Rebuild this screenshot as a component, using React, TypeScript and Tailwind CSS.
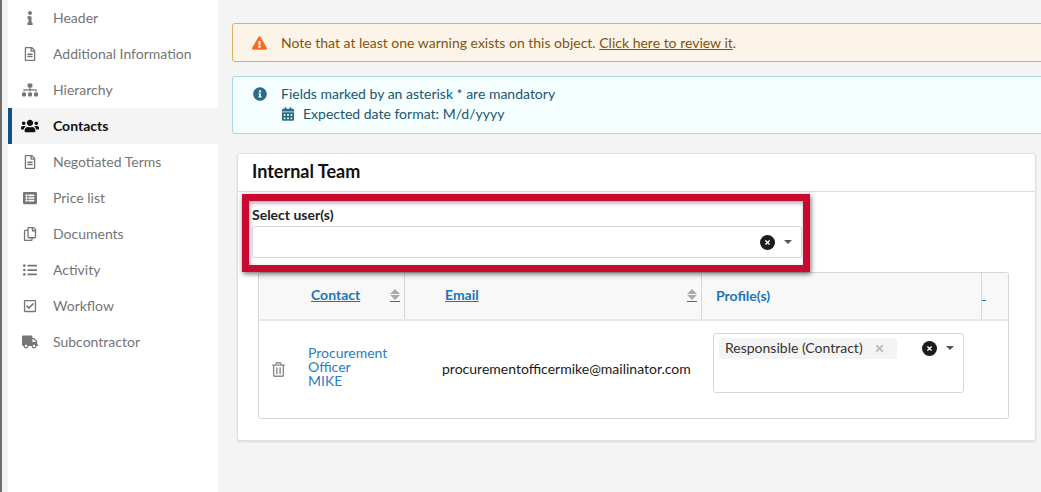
import React from "react";
import {
  FaInfo,
  FaRegFileAlt,
  FaSitemap,
  FaUsers,
  FaListAlt,
  FaRegCopy,
  FaListUl,
  FaRegCheckSquare,
  FaTruck,
  FaExclamationTriangle,
  FaInfoCircle,
  FaCalendarAlt,
  FaRegTrashAlt,
  FaTimes,
} from "react-icons/fa";

const navItems = [
  { label: "Header", icon: FaInfo },
  { label: "Additional Information", icon: FaRegFileAlt },
  { label: "Hierarchy", icon: FaSitemap },
  { label: "Contacts", icon: FaUsers, active: true },
  { label: "Negotiated Terms", icon: FaRegFileAlt },
  { label: "Price list", icon: FaListAlt },
  { label: "Documents", icon: FaRegCopy },
  { label: "Activity", icon: FaListUl },
  { label: "Workflow", icon: FaRegCheckSquare },
  { label: "Subcontractor", icon: FaTruck },
];

function ClearCaret() {
  return (
    <div className="flex items-center">
      <span className="flex h-[15px] w-[15px] items-center justify-center rounded-full bg-[#1c1c1c] text-white">
        <FaTimes className="h-[7px] w-[7px]" />
      </span>
      <span className="ml-[9px] h-0 w-0 border-x-[4px] border-t-[4px] border-x-transparent border-t-[#555]" />
    </div>
  );
}

function SortIcon() {
  return (
    <span className="flex flex-col items-center">
      <span className="h-0 w-0 border-x-[5px] border-b-[5px] border-x-transparent border-b-[#aaa]" />
      <span className="mt-[1px] h-0 w-0 border-x-[5px] border-t-[5px] border-x-transparent border-t-[#aaa]" />
      <span className="mt-[1px] h-px w-[10px] bg-[#1b75bc]" />
    </span>
  );
}

export default function App() {
  return (
    <div className="flex h-[492px] w-[1041px] overflow-hidden bg-[#f4f4f4] font-['Lato',sans-serif] text-sm text-[#1a1a1a]">
      <div className="w-[2px] bg-[#6f6f6f]" />
      <div className="w-[6px]" />
      <nav className="w-[210px] bg-white">
        {navItems.map((item) => {
          const Icon = item.icon;
          return (
            <div
              key={item.label}
              className={
                item.active
                  ? "flex h-9 items-center border-l-4 border-[#12507f] bg-[#f4f4f4] font-bold text-[#111]"
                  : "flex h-9 items-center border-l-4 border-transparent text-[#757575]"
              }
            >
              <span className="flex w-[41px] justify-center pr-[5px]">
                <Icon className={item.active ? "h-[16px] w-[18px]" : "h-[14px] w-[16px]"} />
              </span>
              <span>{item.label}</span>
            </div>
          );
        })}
      </nav>

      <main className="min-w-0 flex-1 pl-[14px] pt-[23px]">
        <div className="flex h-[39px] w-[830px] items-center rounded-[3px] border border-[#dcae62] bg-[#fcf4e8] pl-[19px] text-[#80550f]">
          <FaExclamationTriangle className="h-[14px] w-[15px] text-[#f4701f]" />
          <span className="ml-[14px]">
            Note that at least one warning exists on this object.{" "}
            <a className="underline">Click here to review it</a>.
          </span>
        </div>

        <div className="mt-[14px] h-[58px] w-[830px] rounded-[3px] border border-[#a9d6e3] bg-[#f5ffff] pl-[20px] pt-[7px] leading-[20px] text-[#20566f]">
          <div className="flex items-center">
            <FaInfoCircle className="h-[14px] w-[14px] text-[#2b6a88]" />
            <span className="ml-[14px]">Fields marked by an asterisk * are mandatory</span>
          </div>
          <div className="flex items-center pl-[29px]">
            <FaCalendarAlt className="h-[14px] w-[12px] text-[#2b6a88]" />
            <span className="ml-[9px]">Expected date format: M/d/yyyy</span>
          </div>
        </div>

        <section className="relative ml-[5px] mt-[19px] h-[288px] w-[799px] rounded-[3px] border border-[#e0e0e0] bg-white shadow-[0_1px_2px_rgba(0,0,0,0.12)]">
          <h2 className="flex h-[38px] items-center border-b border-[#dcdcdc] pb-[4px] pl-[14px] text-lg font-bold text-[#111]">
            Internal Team
          </h2>

          <div className="absolute left-[4px] top-[40px] z-10 h-[78px] w-[568px] border-[7px] border-[#c90a30] shadow-[1px_2px_5px_rgba(0,0,0,0.55),inset_1px_2px_4px_rgba(0,0,0,0.35)]">
            <div className="pl-[3px] pt-[5px] font-bold leading-[17px] text-[#222]">Select user(s)</div>
            <div className="ml-[3px] mt-[3px] flex h-[32px] w-[550px] items-center justify-end rounded-[3px] border border-[#d6d6d6] bg-white pr-[9px]">
              <ClearCaret />
            </div>
          </div>

          <div className="absolute left-[20px] top-[118px] w-[751px] rounded-[3px] border border-[#d6d6d6]">
            <div className="flex h-[48px] border-b-2 border-[#e8e8e8] bg-[#f8f8f8] font-bold text-[#1b75bc]">
              <div className="flex w-[146px] items-center border-r border-[#d6d6d6] pb-[2px] pl-[52px]">
                <a className="underline">Contact</a>
                <span className="ml-[30px]"><SortIcon /></span>
              </div>
              <div className="flex w-[297px] items-center border-r border-[#d6d6d6] pb-[2px] pl-[40px] pr-[4px]">
                <a className="flex-1 underline">Email</a>
                <SortIcon />
              </div>
              <div className="w-[280px] border-r border-[#d6d6d6] pl-[14px] pt-[14px] leading-[18px]">Profile(s)</div>
              <div className="flex-1 pt-[14px] leading-[18px]">
                <span className="inline-block h-px w-[4px] bg-[#1b75bc]" />
              </div>
            </div>
            <div className="flex h-[97px] items-center">
              <div className="flex w-[49px] justify-center pr-[10px]">
                <FaRegTrashAlt className="h-[15px] w-[13px] text-[#8a8a8a]" />
              </div>
              <a className="mb-[6px] w-[134px] leading-[14px] text-[#2a7ec3]">
                Procurement
                <br />
                Officer
                <br />
                MIKE
              </a>
              <div className="mb-[1px] w-[271px]">procurementofficermike@mailinator.com</div>
              <div className="mb-[14px] flex h-[60px] w-[251px] items-start justify-between rounded-[3px] border border-[#d6d6d6] pl-[5px] pr-[9px] pt-[4px]">
                <span className="flex h-[21px] w-[178px] items-center rounded-[3px] bg-[#f4f4f4] pl-[6px] text-[#333]">
                  Responsible (Contract)
                  <FaTimes className="ml-[11px] h-[11px] w-[11px] text-[#bdbdbd]" />
                </span>
                <span className="pt-[3px]"><ClearCaret /></span>
              </div>
            </div>
          </div>
        </section>
      </main>
    </div>
  );
}
